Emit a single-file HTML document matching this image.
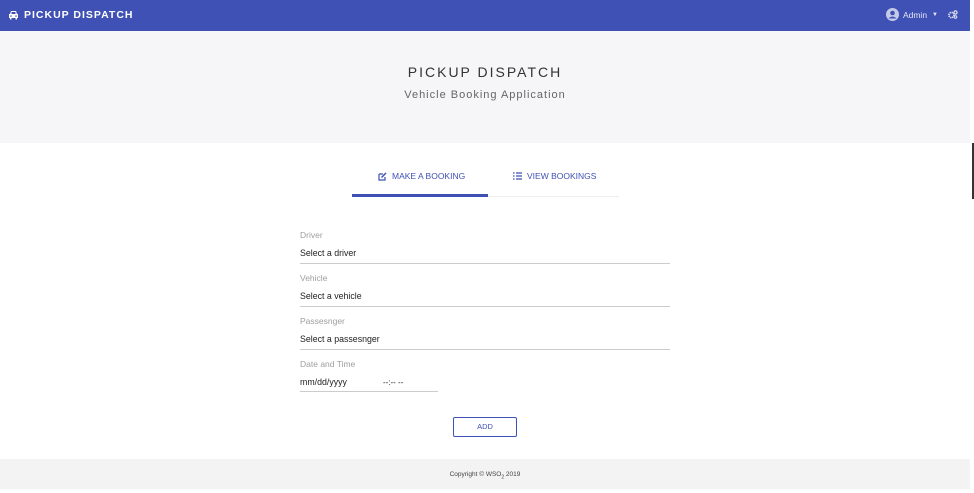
<!DOCTYPE html>
<html><head><meta charset="utf-8"><style>
*{margin:0;padding:0;box-sizing:border-box}
body{width:974px;height:489px;background:#fff;font-family:"Liberation Sans",sans-serif;position:relative;overflow:hidden}
.page{width:970px;height:489px;position:absolute;left:0;top:0}
.top{height:31px;background:#3f51b5;color:#fff;position:relative}
.brand{position:absolute;left:8px;top:9px;font-size:10.5px;font-weight:bold;letter-spacing:1px;display:flex;align-items:center;gap:5px}
.right{position:absolute;right:12px;top:8px;display:flex;align-items:center;font-size:8.5px;color:#e3e6f5}
.hero{height:112px;background:#f6f6f8;text-align:center}
.hero h1{font-weight:normal;font-size:14px;letter-spacing:2px;color:#333;padding-top:33px;line-height:16px}
.hero p{font-size:11px;letter-spacing:1px;color:#666;margin-top:9px}
.tabs{position:absolute;top:143px;left:352px;width:267px;height:54px;border-bottom:1px solid #eee}
.tab{position:absolute;top:28px;font-size:8.5px;color:#3f51b5;display:flex;align-items:center;gap:5px}
.ind{position:absolute;left:0;bottom:-1px;width:136px;height:3px;background:#3f51b5}
.f{position:absolute;left:300px;width:370px}
.f label{display:block;font-size:8.5px;line-height:12px;color:#9e9e9e}
.f .v{font-size:8.8px;line-height:12px;color:#222;margin-top:6px;padding-bottom:4px;border-bottom:1px solid #ccc}
.btn{position:absolute;left:453px;top:417px;width:64px;height:20px;border:1px solid #3f51b5;color:#3f51b5;font-size:7.5px;text-align:center;line-height:18px;border-radius:2px}
.foot{position:absolute;left:0;top:459px;width:970px;height:30px;background:#f3f3f3;text-align:center;font-size:6.5px;color:#444;line-height:31px}
</style></head><body>
<div class="page">
<div class="top">
<div class="brand"><svg width="11" height="10" viewBox="0 0 11 10"><path d="M2 4 L3 1 H8 L9 4 H10 V8 H9 V9.5 H7.5 V8 H3.5 V9.5 H2 V8 H1 V4Z" fill="#fff"/><rect x="3.5" y="2" width="4" height="2" fill="#3f51b5"/><circle cx="3" cy="6" r=".8" fill="#3f51b5"/><circle cx="8" cy="6" r=".8" fill="#3f51b5"/></svg>PICKUP DISPATCH</div>
<div class="right"><svg width="13" height="13" viewBox="0 0 13 13"><circle cx="6.5" cy="6.5" r="6.5" fill="#c5cae9"/><circle cx="6.5" cy="5" r="2.3" fill="#3f51b5"/><path d="M2.5 10.5 Q6.5 6.5 10.5 10.5" fill="#3f51b5"/></svg><span style="margin-left:4px">Admin</span><span style="margin-left:5px;font-size:6px">▼</span><svg style="margin-left:10px" width="10" height="9" viewBox="0 0 10 9"><circle cx="3.5" cy="5" r="2.6" fill="none" stroke="#e3e6f5" stroke-width="1.6" stroke-dasharray="1.3 .7"/><circle cx="7.5" cy="2.5" r="1.6" fill="none" stroke="#e3e6f5" stroke-width="1.2"/><circle cx="7.5" cy="7" r="1.3" fill="none" stroke="#e3e6f5" stroke-width="1"/></svg></div>
</div>
<div class="hero"><h1>PICKUP DISPATCH</h1><p>Vehicle Booking Application</p></div>
<div class="tabs">
<div class="tab" style="left:26px"><svg width="9" height="9" viewBox="0 0 9 9"><path d="M1 2 H5 M1 2 V8 H7 V5" fill="none" stroke="#3f51b5" stroke-width="1.2"/><path d="M3.5 5.5 L8 1" stroke="#3f51b5" stroke-width="1.5"/></svg>MAKE A BOOKING</div>
<div class="tab" style="left:161px"><svg width="9" height="8" viewBox="0 0 9 8"><path d="M0 1H1.5M3 1H9M0 4H1.5M3 4H9M0 7H1.5M3 7H9" stroke="#3f51b5" stroke-width="1.2"/></svg>VIEW BOOKINGS</div>
<div class="ind"></div>
</div>
<div class="f" style="top:229px"><label>Driver</label><div class="v">Select a driver</div></div>
<div class="f" style="top:272px"><label>Vehicle</label><div class="v">Select a vehicle</div></div>
<div class="f" style="top:315px"><label>Passesnger</label><div class="v">Select a passesnger</div></div>
<div class="f" style="top:358px;width:138px"><label>Date and Time</label><div class="v" style="padding-bottom:2px">mm/dd/yyyy<span style="margin-left:36px;font-size:8px">--:-- --</span></div></div>
<div class="btn">ADD</div>
<div class="foot">Copyright © WSO<sub style="font-size:5px">2</sub> 2019</div>
</div>
<div style="position:absolute;left:972px;top:143px;width:2px;height:56px;background:#333"></div>
</body></html>
